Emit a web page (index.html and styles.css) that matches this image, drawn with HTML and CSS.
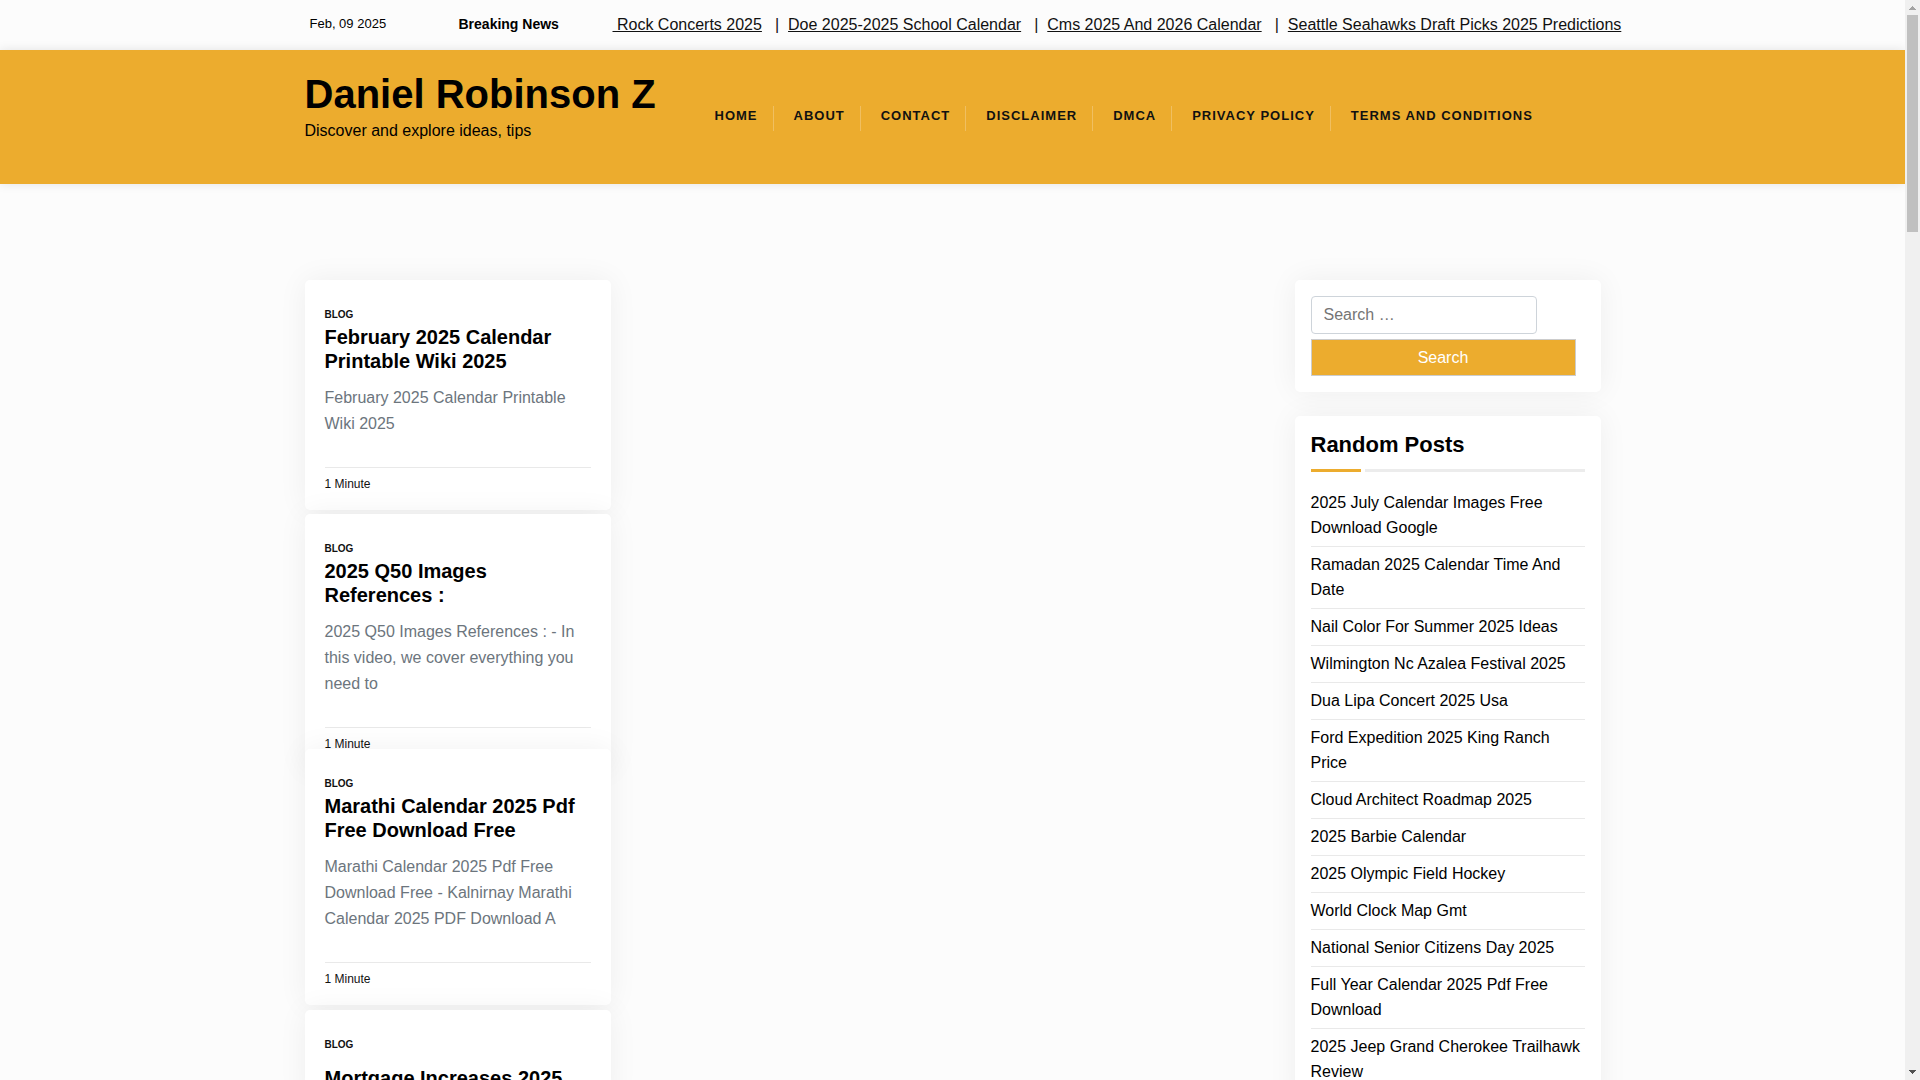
FILE: index.html
```html
<!DOCTYPE html>
<html lang="en">
<head>
<meta charset="utf-8">
<title>Daniel Robinson Z</title>
<link rel="stylesheet" href="styles.css">
</head>
<body>
<div class="viewport">
  <div class="page">
    <div class="topbar">
      <div class="container topbar-row">
        <span class="date">Feb, 09 2025</span>
        <strong class="breaking">Breaking News</strong>
        <div class="ticker">
          <a href="#"> Rock Concerts 2025</a><span class="bar">|</span>
          <a href="#">Doe 2025-2025 School Calendar</a><span class="bar">|</span>
          <a href="#">Cms 2025 And 2026 Calendar</a><span class="bar">|</span>
          <a href="#">Seattle Seahawks Draft Picks 2025 Predictions</a>
        </div>
      </div>
    </div>
    <header class="header">
      <div class="container header-row">
        <div class="brand">
          <h1 class="site-title"><a href="#">Daniel Robinson Z</a></h1>
          <p class="tagline">Discover and explore ideas, tips</p>
        </div>
        <nav class="nav">
          <a href="#">Home</a>
          <a href="#">About</a>
          <a href="#">Contact</a>
          <a href="#">Disclaimer</a>
          <a href="#">DMCA</a>
          <a href="#">Privacy Policy</a>
          <a href="#">Terms and Conditions</a>
        </nav>
      </div>
    </header>
    <div class="container content">
      <main class="posts">
        <article class="card post">
          <a class="category" href="#">BLOG</a>
          <h2 class="post-title"><a href="#">February 2025 Calendar Printable Wiki 2025</a></h2>
          <p class="excerpt">February 2025 Calendar Printable Wiki 2025</p>
          <div class="meta">1 Minute</div>
        </article>
        <article class="card post">
          <a class="category" href="#">BLOG</a>
          <h2 class="post-title"><a href="#">2025 Q50 Images References :</a></h2>
          <p class="excerpt">2025 Q50 Images References : - In this video, we cover everything you need to</p>
          <div class="meta">1 Minute</div>
        </article>
        <article class="card post">
          <a class="category" href="#">BLOG</a>
          <h2 class="post-title"><a href="#">Marathi Calendar 2025 Pdf Free Download Free</a></h2>
          <p class="excerpt">Marathi Calendar 2025 Pdf Free Download Free - Kalnirnay Marathi Calendar 2025 PDF Download A</p>
          <div class="meta">1 Minute</div>
        </article>
        <article class="card post post-spaced">
          <a class="category" href="#">BLOG</a>
          <h2 class="post-title"><a href="#">Mortgage Increases 2025</a></h2>
        </article>
      </main>
      <aside class="sidebar">
        <form class="card widget search">
          <input class="search-field" type="search" placeholder="Search …" aria-label="Search for">
          <button class="search-button" type="button">Search</button>
        </form>
        <section class="card widget">
          <h2 class="widget-title">Random Posts</h2>
          <div class="rule"></div>
          <ul class="links">
            <li><a href="#">2025 July Calendar Images Free Download Google</a></li>
            <li><a href="#">Ramadan 2025 Calendar Time And Date</a></li>
            <li><a href="#">Nail Color For Summer 2025 Ideas</a></li>
            <li><a href="#">Wilmington Nc Azalea Festival 2025</a></li>
            <li><a href="#">Dua Lipa Concert 2025 Usa</a></li>
            <li><a href="#">Ford Expedition 2025 King Ranch Price</a></li>
            <li><a href="#">Cloud Architect Roadmap 2025</a></li>
            <li><a href="#">2025 Barbie Calendar</a></li>
            <li><a href="#">2025 Olympic Field Hockey</a></li>
            <li><a href="#">World Clock Map Gmt</a></li>
            <li><a href="#">National Senior Citizens Day 2025</a></li>
            <li><a href="#">Full Year Calendar 2025 Pdf Free Download</a></li>
            <li><a href="#">2025 Jeep Grand Cherokee Trailhawk Review</a></li>
          </ul>
        </section>
      </aside>
    </div>
  </div>
  <div class="scrollbar" aria-hidden="true">
    <svg width="7" height="4" viewBox="0 0 7 4" shape-rendering="crispEdges"><path d="M3 0h1v1h1v1h1v1h1v1H0V3h1V2h1V1h1z" fill="#a3a3a3"/></svg>
    <div class="track"><div class="thumb"></div></div>
    <svg width="7" height="4" viewBox="0 0 7 4" shape-rendering="crispEdges"><path d="M0 0h7v1H6v1H5v1H4v1H3V3H2V2H1V1H0z" fill="#505050"/></svg>
  </div>
</div>
</body>
</html>
```
FILE: styles.css
```css
* { box-sizing: border-box; }

body {
  margin: 0;
  background: #fcfcfc;
  color: #000;
  font-family: "Liberation Sans", Arial, sans-serif;
  font-size: 16px;
  line-height: 26px;
}

a { color: inherit; text-decoration: none; }
h1, h2, p, ul { margin: 0; padding: 0; }

.viewport {
  display: grid;
  grid-template-columns: minmax(0, 1fr) 15px;
  height: 100vh;
  overflow: hidden;
}

.page { overflow: hidden; }

.container {
  width: 100%;
  max-width: 1320px;
  margin: 0 auto;
  padding: 0 12px;
}

.topbar-row { display: flex; align-items: center; height: 50px; padding-bottom: 2px; }
.date { flex: 0 0 154px; padding-left: 5px; font-size: 13px; }
.breaking { flex: 0 0 154px; font-size: 14px; }

.ticker {
  display: flex;
  flex-shrink: 0;
  padding-top: 2px;
  white-space: pre;
  color: #111;
}
.ticker a { text-decoration: underline; }
.bar { margin: 0 9px 0 13px; }

.header {
  background: #ecac2e;
  box-shadow: 0 0 10px rgba(0, 0, 0, 0.1);
}
.header-row { display: flex; min-height: 134px; padding-top: 20px; }
.brand { width: 410px; flex-shrink: 0; }
.site-title { font-size: 40px; line-height: 48px; }

.nav {
  display: flex;
  gap: 20px;
  padding-top: 36px;
  color: #111;
  font-size: 13px;
  font-weight: 700;
  line-height: 20px;
  letter-spacing: 1px;
  text-transform: uppercase;
  white-space: nowrap;
}
.nav a {
  height: 25px;
  padding-right: 15px;
  border-right: 1px solid #f0bf61;
}
.nav a:last-child { border-right: 0; }

.content {
  display: grid;
  grid-template-columns: minmax(0, 3fr) minmax(0, 306px);
  gap: 24px;
  padding-top: 96px;
}

/* Packed rows: a post taller than its row runs under the next one. */
.posts {
  display: grid;
  grid-template-columns: minmax(0, 306px);
  grid-template-rows: 234px 235px 261px auto;
  align-items: start;
}

.card {
  background: #fff;
  border-radius: 5px;
  box-shadow: 0 0 30px rgba(0, 0, 0, 0.06);
}

.post { padding: 25px 20px 13px; }
.category {
  display: block;
  color: #111;
  font-size: 10px;
  font-weight: 700;
  line-height: 20px;
}
.post-title { font-size: 20px; line-height: 24px; }
.post-spaced .post-title { padding-top: 11px; }
.excerpt { margin: 12px 0 30px; color: #6c757d; }
.meta {
  padding-top: 3px;
  border-top: 1px solid #e9e9e9;
  color: #111;
  font-size: 12px;
}

.sidebar { display: flex; flex-direction: column; gap: 24px; }
.widget { padding: 16px; }

.search { display: flex; flex-direction: column; gap: 5px; }
.search-field {
  width: 226px;
  max-width: 100%;
  height: 38px;
  padding: 0 12px;
  border: 1px solid #ced4da;
  border-radius: 4px;
  background: #fff;
  font: inherit;
  appearance: none;
}
.search-field::placeholder { color: #757575; }
.search-button {
  width: 265px;
  max-width: 100%;
  height: 37px;
  border: 1px solid #ccc;
  background: #ecac2e;
  color: #fff;
  font: inherit;
}

.widget-title { font-size: 22px; line-height: 26px; }
.rule {
  height: 3px;
  margin: 11px 0 13px;
  background: linear-gradient(90deg, #ecac2e 50px, #fff 50px, #fff 54px, #ececec 54px);
}
.links { list-style: none; line-height: 25px; }
.links li { padding: 5px 0 6px; border-bottom: 1px solid #e9e9e9; }

.scrollbar {
  display: flex;
  flex-direction: column;
  align-items: center;
  gap: 5px;
  padding: 6px 0;
  background: #f0f0f0;
}
.track { flex: 1; width: 11px; }
.thumb { height: 217px; background: #c0c0c0; }
```
